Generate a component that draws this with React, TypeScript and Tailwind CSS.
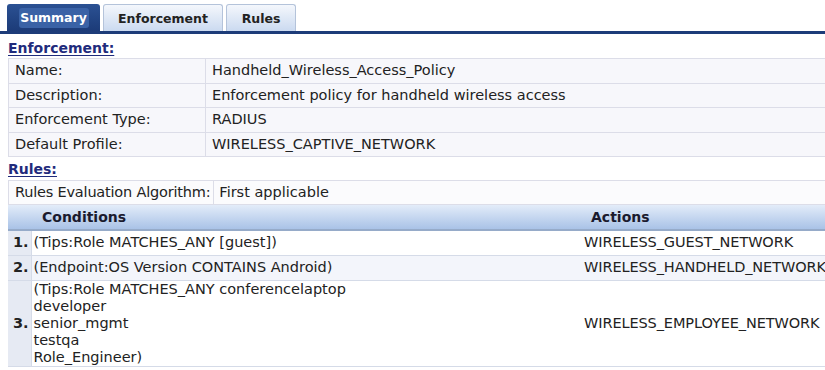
import React from "react";

const font = { fontFamily: '"DejaVu Sans", Verdana, sans-serif' };

const summaryRows: [string, string][] = [
  ["Name:", "Handheld_Wireless_Access_Policy"],
  ["Description:", "Enforcement policy for handheld wireless access"],
  ["Enforcement Type:", "RADIUS"],
  ["Default Profile:", "WIRELESS_CAPTIVE_NETWORK"],
];

const rules: { conds: string[]; action: string }[] = [
  { conds: ["(Tips:Role MATCHES_ANY [guest])"], action: "WIRELESS_GUEST_NETWORK" },
  { conds: ["(Endpoint:OS Version CONTAINS Android)"], action: "WIRELESS_HANDHELD_NETWORK" },
  {
    conds: [
      "(Tips:Role MATCHES_ANY conferencelaptop",
      "developer",
      "senior_mgmt",
      "testqa",
      "Role_Engineer)",
    ],
    action: "WIRELESS_EMPLOYEE_NETWORK",
  },
];

function Tabs() {
  return (
    <div className="flex items-end gap-[3px] border-b-[3px] border-[#1d3c79] pl-[7px] pt-[4px]">
      <div className="flex h-[27px] w-[93px] items-center justify-center rounded-t-[3px] bg-gradient-to-b from-[#2b5193] to-[#1c3b78]">
        <span className="flex h-[20px] w-[70px] items-center justify-center rounded-[3px] bg-[#3a62a6] text-[12.5px] font-bold text-white">
          Summary
        </span>
      </div>
      <div className="flex h-[27px] w-[120px] items-center justify-center rounded-t-[3px] border border-b-0 border-[#b4c3da] bg-gradient-to-b from-[#f4f7fc] to-[#cbdaf0] text-[12.5px] font-bold text-[#222]">
        Enforcement
      </div>
      <div className="flex h-[27px] w-[70px] items-center justify-center rounded-t-[3px] border border-b-0 border-[#b4c3da] bg-gradient-to-b from-[#f4f7fc] to-[#cbdaf0] text-[12.5px] font-bold text-[#222]">
        Rules
      </div>
    </div>
  );
}

function Heading({ children }: { children: React.ReactNode }) {
  return (
    <div className="pl-[8px] text-[14px] font-bold leading-[17px] text-[#1f2b7c] underline underline-offset-2">
      {children}
    </div>
  );
}

export default function App() {
  return (
    <div
      className="h-[370px] w-[825px] overflow-hidden whitespace-nowrap bg-white text-[14.5px] leading-[17px] text-[#222]"
      style={font}
    >
      <Tabs />
      <div className="mt-[6px]">
        <Heading>Enforcement:</Heading>
      </div>
      <table className="ml-[8px] mt-[1px] w-[830px] border-collapse">
        <tbody>
          {summaryRows.map(([k, v]) => (
            <tr key={k} className="h-[24.5px] bg-[#f7f7fb]">
              <td className="w-[197px] border border-[#dcdde8] pl-[6px]">{k}</td>
              <td className="border border-[#dcdde8] pl-[6px]">{v}</td>
            </tr>
          ))}
        </tbody>
      </table>
      <div className="mt-[4px]">
        <Heading>Rules:</Heading>
      </div>
      <table className="ml-[8px] mt-[2px] w-[830px] border-collapse">
        <tbody>
          <tr className="h-[24px] bg-[#fbfbfd]">
            <td className="w-[204px] border border-[#dcdde8] pl-[6px] pr-[3px] tracking-[-0.2px]">
              Rules Evaluation Algorithm:
            </td>
            <td className="border border-[#dcdde8] pl-[5px]">First applicable</td>
          </tr>
        </tbody>
      </table>
      <table className="ml-[8px] w-[830px] border-collapse">
        <thead>
          <tr className="h-[25px] bg-gradient-to-b from-[#e3ecf9] to-[#a7c1e6] text-[14px] font-bold text-[#1a1a2e]">
            <th className="w-[23px] border-b-2 border-[#96abc9]"></th>
            <th className="w-[547px] border-b-2 border-[#96abc9] pl-[11px] text-left">Conditions</th>
            <th className="border-b-2 border-[#96abc9] pl-[13px] text-left">Actions</th>
          </tr>
        </thead>
        <tbody>
          {rules.map((r, i) => (
            <tr key={i} className={i === 1 ? "h-[25px] bg-[#f3f5fb]" : "h-[25px] bg-white"}>
              <td className="border-b border-r border-[#d5dbe8] bg-[#e6eaf3] pr-[2px] text-right font-bold">
                {i + 1}.
              </td>
              <td className="border-b border-[#d5dbe8] pl-[2px]">
                {r.conds.map((c) => (
                  <div key={c}>{c}</div>
                ))}
              </td>
              <td className="border-b border-[#d5dbe8] pl-[6px] tracking-[-0.1px]">{r.action}</td>
            </tr>
          ))}
        </tbody>
      </table>
    </div>
  );
}
